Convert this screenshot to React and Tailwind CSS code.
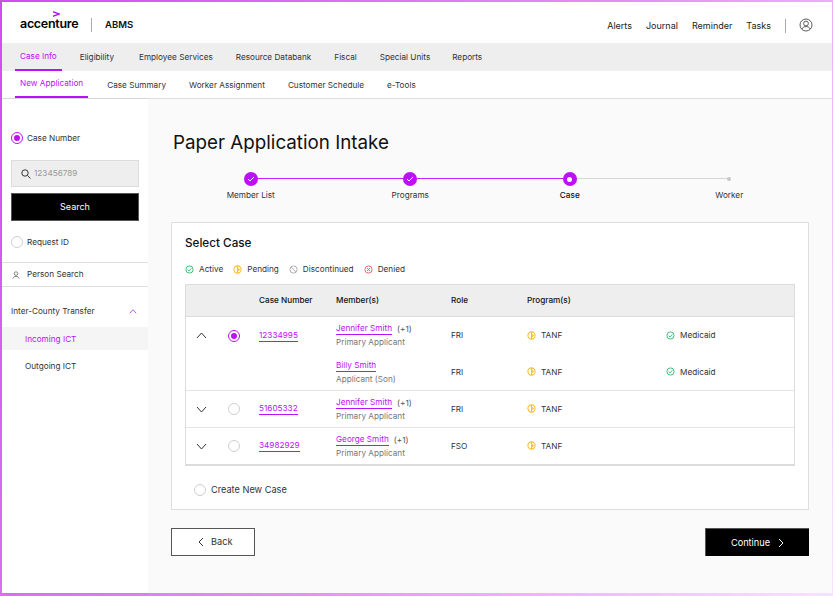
import React from "react";

function Radio({ on }) {
  return (
    <span className={`flex h-[12px] w-[12px] shrink-0 items-center justify-center rounded-full border bg-white ${on ? "border-[#bc10f8]" : "border-[#cfcfcf]"}`}>
      {on && <span className="h-[6px] w-[6px] rounded-full bg-[#bc10f8]" />}
    </span>
  );
}

function Chevron({ dir = "down", color = "#333", w = 11, h = 7 }) {
  const d = { down: "M1 1l4.5 5L10 1", up: "M1 6l4.5-5L10 6" }[dir];
  return (
    <svg width={w} height={h} viewBox="0 0 11 7" fill="none" stroke={color} strokeWidth="1">
      <path d={d} />
    </svg>
  );
}

function Status({ kind }) {
  if (kind === "active")
    return (
      <svg width="9" height="9" viewBox="0 0 10 10" fill="none" stroke="#34b36b" strokeWidth="1" className="shrink-0">
        <circle cx="5" cy="5" r="4" />
        <path d="M3 5.2l1.5 1.4L7 3.8" />
      </svg>
    );
  if (kind === "pending")
    return (
      <svg width="9" height="9" viewBox="0 0 10 10" fill="none" stroke="#fbc02d" strokeWidth="1.2" className="shrink-0">
        <circle cx="5" cy="5" r="4" />
        <path d="M5 1v8M5 3.5l2 1.5-2 1.5" />
      </svg>
    );
  if (kind === "disc")
    return (
      <svg width="9" height="9" viewBox="0 0 10 10" fill="none" stroke="#a8a8a8" strokeWidth="1" className="shrink-0">
        <circle cx="5" cy="5" r="4" />
        <path d="M2.2 2.2l5.6 5.6" />
      </svg>
    );
  return (
    <svg width="9" height="9" viewBox="0 0 10 10" fill="none" stroke="#f0566f" strokeWidth="1" className="shrink-0">
      <circle cx="5" cy="5" r="4" />
      <path d="M3.4 3.4l3.2 3.2M6.6 3.4l-3.2 3.2" />
    </svg>
  );
}

function Prog({ kind, label }) {
  return (
    <span className="flex items-center gap-[5px] text-[8.2px] text-[#333]">
      <Status kind={kind} />
      {label}
    </span>
  );
}

function Step({ state, label, bold, line }) {
  return (
    <div className="relative flex w-[159.5px] flex-col items-center">
      {line && <span className={`absolute left-1/2 top-[6px] h-[1px] w-[159.5px] ${line === "on" ? "bg-[#c71fff]" : "bg-[#d5d5d5]"}`} />}
      <span className="relative z-10 flex h-[14px] items-center justify-center">
        {state === "done" && (
          <span className="flex h-[14px] w-[14px] items-center justify-center rounded-full bg-[#bc10f8]">
            <svg width="8" height="6" viewBox="0 0 8 6" fill="none" stroke="#fff" strokeWidth="1"><path d="M1 3l2 2 4-4" /></svg>
          </span>
        )}
        {state === "cur" && (
          <span className="flex h-[14px] w-[14px] items-center justify-center rounded-full bg-[#bc10f8]">
            <span className="h-[5px] w-[5px] rounded-full bg-white" />
          </span>
        )}
        {state === "todo" && <span className="h-[4px] w-[4px] rounded-full bg-[#c8c8c8]" />}
      </span>
      <span className={`mt-[3px] text-[8.2px] leading-[12px] ${bold ? "font-medium text-[#111]" : "text-[#333]"}`}>{label}</span>
    </div>
  );
}

function Linked({ children }) {
  return <span className="border-b border-[#bc10f8] pb-[1px] text-[8.2px] leading-[10px] text-[#bc10f8]">{children}</span>;
}

function Member({ name, plus, role }) {
  return (
    <div className="flex flex-col">
      <div className="flex items-center gap-[5px]">
        <Linked>{name}</Linked>
        {plus && <span className="text-[8.2px] leading-[10px] text-[#555]">(+1)</span>}
      </div>
      <span className="mt-[2px] text-[8.2px] leading-[11px] text-[#777]">{role}</span>
    </div>
  );
}

function Row({ chevron, on, num, name, plus, role, r, med, border, short }) {
  return (
    <div className={`grid ${short ? "h-[36px]" : "h-[37px]"} grid-cols-[73px_77px_115px_76px_139px_1fr] items-center ${border ? "border-t border-[#e4e4e4]" : ""}`}>
      <div className="flex items-center">
        <div className="flex w-[31px] justify-center">{chevron && <Chevron dir={chevron} />}</div>
        <div className="flex w-[34px] justify-center">{chevron && <Radio on={on} />}</div>
      </div>
      <div className="flex">{num && <Linked>{num}</Linked>}</div>
      <Member name={name} plus={plus} role={role} />
      <div className="text-[8.2px] text-[#333]">{r}</div>
      <Prog kind="pending" label="TANF" />
      <div>{med && <Prog kind="active" label="Medicaid" />}</div>
    </div>
  );
}

export default function App() {
  return (
    <div
      className="h-[596px] w-[833px] overflow-hidden bg-[linear-gradient(120deg,#d24bf0_0%,#e690f7_55%,#f6e3fc_100%)] pb-[3px] pl-[2px] pr-[1px] pt-[2px]"
      style={{ fontFamily: "Inter, 'Liberation Sans', sans-serif" }}
    >
      <div className="flex h-full flex-col bg-white text-[#222]">
        <header className="flex h-[41px] items-center justify-between pl-[18px] pr-[19px] pt-[2px]">
          <div className="flex items-center">
            <div className="relative w-[57px] text-[12.5px] font-semibold leading-[16px] tracking-[-0.3px] text-black">
              accenture
              <svg className="absolute left-[33px] top-[-5px]" width="7" height="6" viewBox="0 0 7 6" fill="#bc10f8"><path d="M0 0l7 2.4v1.2L0 6V4.4L4.2 3 0 1.6z" /></svg>
            </div>
            <span className="ml-[14px] mt-[2px] h-[14px] w-[1px] bg-[#aaa]" />
            <span className="ml-[13px] mt-[4px] text-[9.5px] font-semibold text-[#111]">ABMS</span>
          </div>
          <div className="mt-[4px] flex items-center text-[9px] text-[#222]">
            <span>Alerts</span>
            <span className="ml-[14px]">Journal</span>
            <span className="ml-[14px]">Reminder</span>
            <span className="ml-[14px]">Tasks</span>
            <span className="ml-[14px] h-[14px] w-[1px] bg-[#aaa]" />
            <svg className="mb-[2px] ml-[13px]" width="14" height="14" viewBox="0 0 14 14" fill="none" stroke="#333" strokeWidth="0.8">
              <circle cx="7" cy="7" r="6" />
              <circle cx="7" cy="5.5" r="2.4" />
              <path d="M2.8 11c1-1.8 2.5-2.4 4.2-2.4s3.2.6 4.2 2.4" />
            </svg>
          </div>
        </header>

        <nav className="flex h-[28px] items-stretch bg-[#eeeeee] pl-[13px] text-[8.2px] text-[#333]">
          <span className="flex items-center border-b-2 border-[#bc10f8] px-[5px] text-[#bc10f8]">Case Info</span>
          <span className="ml-[18px] flex items-center">Eligibility</span>
          <span className="ml-[25px] flex items-center">Employee Services</span>
          <span className="ml-[23px] flex items-center">Resource Databank</span>
          <span className="ml-[23px] flex items-center">Fiscal</span>
          <span className="ml-[23px] flex items-center">Special Units</span>
          <span className="ml-[22px] flex items-center">Reports</span>
        </nav>

        <nav className="flex h-[28px] items-stretch border-b border-[#dedede] pl-[13px] text-[8.2px] text-[#333]">
          <span className="flex items-center border-b-2 border-[#bc10f8] px-[5px] text-[#bc10f8]">New Application</span>
          <span className="ml-[19px] flex items-center pt-[2px]">Case Summary</span>
          <span className="ml-[23px] flex items-center pt-[2px]">Worker Assignment</span>
          <span className="ml-[23px] flex items-center pt-[2px]">Customer Schedule</span>
          <span className="ml-[23px] flex items-center pt-[2px]">e-Tools</span>
        </nav>

        <div className="flex min-h-0 flex-1">
          <aside className="w-[146px] shrink-0 text-[8.2px] text-[#333] shadow-[1px_0_3px_rgba(0,0,0,0.08)]">
            <div className="px-[9px] pt-[33px]">
              <div className="flex h-[12px] items-center gap-[4px]"><Radio on /> Case Number</div>
              <div className="mt-[16px] flex h-[27px] items-center gap-[3px] border border-[#dcdcdc] bg-[#eeeeee] pl-[9px] text-[#999]">
                <svg width="10" height="10" viewBox="0 0 10 10" fill="none" stroke="#222" strokeWidth="0.9"><circle cx="4" cy="4" r="3.2" /><path d="M6.4 6.4L9.5 9.5" /></svg>
                123456789
              </div>
              <button className="mt-[6px] flex h-[28px] w-full items-center justify-center border border-[#555] bg-black text-[9px] text-white">Search</button>
              <div className="mt-[15px] flex h-[12px] items-center gap-[4px]"><Radio /> Request ID</div>
            </div>
            <div className="mt-[14px] flex h-[25px] items-center gap-[7px] border-y border-[#dfdfdf] pl-[10px]">
              <svg width="8" height="8" viewBox="0 0 8 8" fill="none" stroke="#666" strokeWidth="0.8"><circle cx="4" cy="2.6" r="1.8" /><path d="M0.8 7.6c.5-1.6 1.7-2.2 3.2-2.2s2.7.6 3.2 2.2" /></svg>
              Person Search
            </div>
            <div className="mt-[18px] flex h-[13px] items-center justify-between pl-[9px] pr-[11px]">
              Inter-County Transfer
              <Chevron dir="up" color="#bc10f8" w={8} h={5} />
            </div>
            <div className="mt-[9px] flex h-[23px] items-center bg-[#f5f5f5] pl-[23px] pt-[1px] text-[#bc10f8]">Incoming ICT</div>
            <div className="mt-[5px] flex h-[23px] items-center pl-[23px]">Outgoing ICT</div>
          </aside>

          <main className="flex-1 bg-[#fafafa] px-[23px]">
            <h1 className="ml-[2px] mt-[32px] text-[18.8px] font-normal leading-[24px] text-[#111]">Paper Application Intake</h1>
            <div className="mt-[17px] flex">
              <Step state="done" label="Member List" line="on" />
              <Step state="done" label="Programs" line="on" />
              <Step state="cur" label="Case" bold line="off" />
              <Step state="todo" label="Worker" />
            </div>

            <section className="mt-[21px] h-[288px] border border-[#dedede] bg-white px-[13px]">
              <h2 className="mt-[13px] text-[11.7px] font-medium leading-[14px] text-[#111]">Select Case</h2>
              <div className="mt-[13px] flex h-[12px] items-center text-[8.2px] text-[#333]">
                <Prog kind="active" label="Active" />
                <span className="ml-[10px]"><Prog kind="pending" label="Pending" /></span>
                <span className="ml-[10px]"><Prog kind="disc" label="Discontinued" /></span>
                <span className="ml-[10px]"><Prog kind="denied" label="Denied" /></span>
              </div>

              <div className="mt-[9px] w-[610px] border border-b-2 border-[#dcdcdc]">
                <div className="grid h-[32px] grid-cols-[73px_77px_115px_76px_139px_1fr] items-center border-b border-[#dcdcdc] bg-[#eeeeee] text-[8.2px] font-medium text-[#111]">
                  <span />
                  <span>Case Number</span>
                  <span>Member(s)</span>
                  <span>Role</span>
                  <span>Program(s)</span>
                  <span />
                </div>
                <Row chevron="up" on num="12334995" name="Jennifer Smith" plus role="Primary Applicant" r="FRI" med />
                <Row short name="Billy Smith" role="Applicant (Son)" r="FRI" med />
                <Row border chevron="down" num="51605332" name="Jennifer Smith" plus role="Primary Applicant" r="FRI" />
                <Row border chevron="down" num="34982929" name="George Smith" plus role="Primary Applicant" r="FSO" />
              </div>

              <div className="ml-[9px] mt-[17px] flex h-[13px] items-center gap-[5px] text-[9.2px] text-[#333]">
                <Radio /> Create New Case
              </div>
            </section>

            <div className="mt-[18px] flex justify-between">
              <button className="flex h-[28px] w-[84px] items-center gap-[7px] border border-[#555] bg-white pl-[26px] text-[9.2px] text-[#333]">
                <svg width="6" height="10" viewBox="0 0 6 10" fill="none" stroke="#333" strokeWidth="1"><path d="M5 1L1 5l4 4" /></svg>
                Back
              </button>
              <button className="flex h-[28px] w-[104px] items-center justify-center gap-[8px] border-l border-t border-[#555] bg-black text-[9.2px] text-white">
                Continue
                <svg width="6" height="10" viewBox="0 0 6 10" fill="none" stroke="#fff" strokeWidth="1"><path d="M1 1l4 4-4 4" /></svg>
              </button>
            </div>
          </main>
        </div>
      </div>
    </div>
  );
}
